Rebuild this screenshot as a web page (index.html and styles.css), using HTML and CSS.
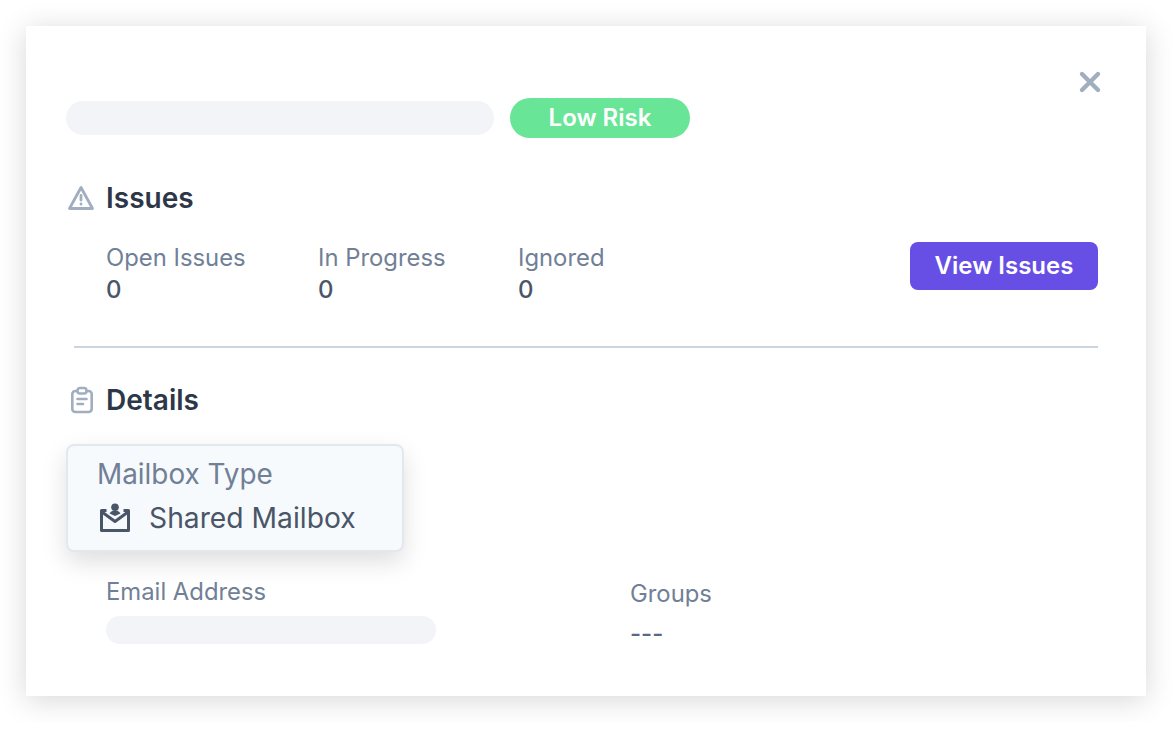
FILE: index.html
```html
<!DOCTYPE html>
<html lang="en">
<head>
<meta charset="utf-8">
<title>Mailbox details</title>
<link rel="stylesheet" href="styles.css">
</head>
<body>
<main class="card">
  <button class="close" aria-label="Close">
    <svg viewBox="0 0 24 24" width="24" height="24" fill="none" stroke="currentColor" stroke-width="4.4" stroke-linecap="round"><path d="M4 4l16 16M20 4L4 20"/></svg>
  </button>
  <header class="title-row">
    <div class="skeleton title-skeleton"></div>
    <span class="badge">Low Risk</span>
  </header>
  <section class="issues">
    <h2 class="heading">
      <svg class="heading-icon" viewBox="0 0 28 28" width="28" height="28" fill="none" stroke="currentColor" stroke-width="2.8" stroke-linecap="round" stroke-linejoin="round"><path d="M15 3.500L3.500 24.500h23z"/><path d="M15 11.500v4.500M15 20v.2"/></svg>
      Issues
    </h2>
    <div class="issue-row">
      <div class="stat stat-open"><div class="label">Open Issues</div><div class="value">0</div></div>
      <div class="stat stat-progress"><div class="label">In Progress</div><div class="value">0</div></div>
      <div class="stat"><div class="label">Ignored</div><div class="value">0</div></div>
      <button class="primary">View Issues</button>
    </div>
  </section>
  <hr class="divider">
  <section class="details">
    <h2 class="heading">
      <svg class="heading-icon" viewBox="0 0 28 28" width="28" height="28" fill="none" stroke="currentColor" stroke-width="2.6" stroke-linecap="round" stroke-linejoin="round"><path d="M11 5H9.300a3 3 0 0 0-3 3v15a3 3 0 0 0 3 3h13.400a3 3 0 0 0 3-3V8a3 3 0 0 0-3-3H21"/><rect x="11.500" y="2" width="9" height="5.500" rx="2.500"/><path d="M11.500 13h9M11.500 18h5.500"/></svg>
      Details
    </h2>
    <div class="tooltip-card">
      <div class="tooltip-label">Mailbox Type</div>
      <div class="tooltip-value">
        <svg class="mailbox-icon" viewBox="0 0 32 28" width="32" height="28" fill="none" stroke="currentColor" stroke-width="3" stroke-linejoin="round"><path d="M7.500 6.500H2.500v20h27v-20H24.500"/><path d="M3 8L16 17.500 29 8"/><circle cx="16" cy="3.200" r="3.800" fill="currentColor" stroke="none"/><path d="M10.500 9.500c1-2 3-3 5.500-3s4.500 1 5.500 3L16 12z" fill="currentColor" stroke="none"/></svg>
        Shared Mailbox
      </div>
    </div>
    <div class="detail-grid">
      <div class="detail-email"><div class="label">Email Address</div><div class="skeleton email-skeleton"></div></div>
      <div class="detail-groups"><div class="label">Groups</div><div class="dashes">---</div></div>
    </div>
  </section>
</main>
</body>
</html>
```
FILE: styles.css
```css
* { box-sizing: border-box; }
html, body { margin: 0; background: #fff; }
body {
  padding: 26px;
  font-family: Inter, "Liberation Sans", sans-serif;
  color: #2d3748;
  overflow: hidden;
}
.card {
  position: relative;
  width: 1120px;
  height: 670px;
  background: #fff;
  padding: 72px 48px 0 40px;
  box-shadow: 0 4px 28px rgba(0, 0, 0, 0.16);
}
.close {
  position: absolute;
  top: 44px;
  right: 44px;
  width: 24px;
  height: 24px;
  padding: 0;
  border: 0;
  background: none;
  color: #a0aec0;
}
.close svg { display: block; }
.title-row { display: flex; align-items: center; gap: 16px; height: 40px; }
.skeleton { background: #f2f4f8; border-radius: 17px; }
.title-skeleton { width: 428px; height: 34px; }
.badge {
  width: 180px;
  height: 40px;
  border-radius: 20px;
  background: #68e597;
  color: #fff;
  font-size: 24px;
  font-weight: 600;
  line-height: 40px;
  text-align: center;
}
.issues { margin-top: 42px; }
.heading {
  display: flex;
  align-items: center;
  gap: 12px;
  margin: 0;
  height: 36px;
  font-size: 28px;
  font-weight: 600;
  color: #2d3748;
}
.heading-icon { color: #a0aec0; flex: none; }
.issue-row { display: flex; align-items: flex-start; margin: 26px 0 0 40px; height: 64px; }
.stat { width: 200px; }
.stat-open { width: 212px; }
.label { font-size: 23.85px; line-height: 32px; color: #718096; }
.value { font-size: 24px; line-height: 32px; font-weight: 500; color: #4a5568; }
.primary {
  margin: 0 0 0 auto;
  width: 188px;
  height: 48px;
  padding-bottom: 2px;
  border: 0;
  border-radius: 8px;
  background: #674fe6;
  color: #fff;
  font: 600 24px Inter, sans-serif;
}
.divider { margin: 40px 0 0 8px; border: 0; border-top: 2px solid #cbd5e0; }
.details { margin-top: 34px; }
.tooltip-card {
  width: 338px;
  height: 108px;
  margin: 26px 0 0 0;
  padding: 10px 29px;
  background: #f7fafc;
  border: 2px solid #e2e8f0;
  border-radius: 8px;
  box-shadow: 0 10px 24px rgba(0, 0, 0, 0.13);
}
.tooltip-label { font-size: 27.9px; line-height: 36px; color: #718096; }
.tooltip-value {
  display: flex;
  align-items: center;
  gap: 18px;
  margin-top: 8px;
  font-size: 28.25px;
  line-height: 36px;
  color: #4a5568;
}
.mailbox-icon { flex: none; margin-left: 2px; overflow: visible; }
.detail-grid { display: flex; margin: 24px 0 0 40px; }
.detail-email { width: 524px; }
.email-skeleton { width: 330px; height: 28px; margin-top: 8px; border-radius: 14px; }
.detail-groups { padding-top: 2px; }
.dashes { font-size: 24px; font-weight: 500; line-height: 36px; margin-top: 6px; color: #5a6880; }
```
